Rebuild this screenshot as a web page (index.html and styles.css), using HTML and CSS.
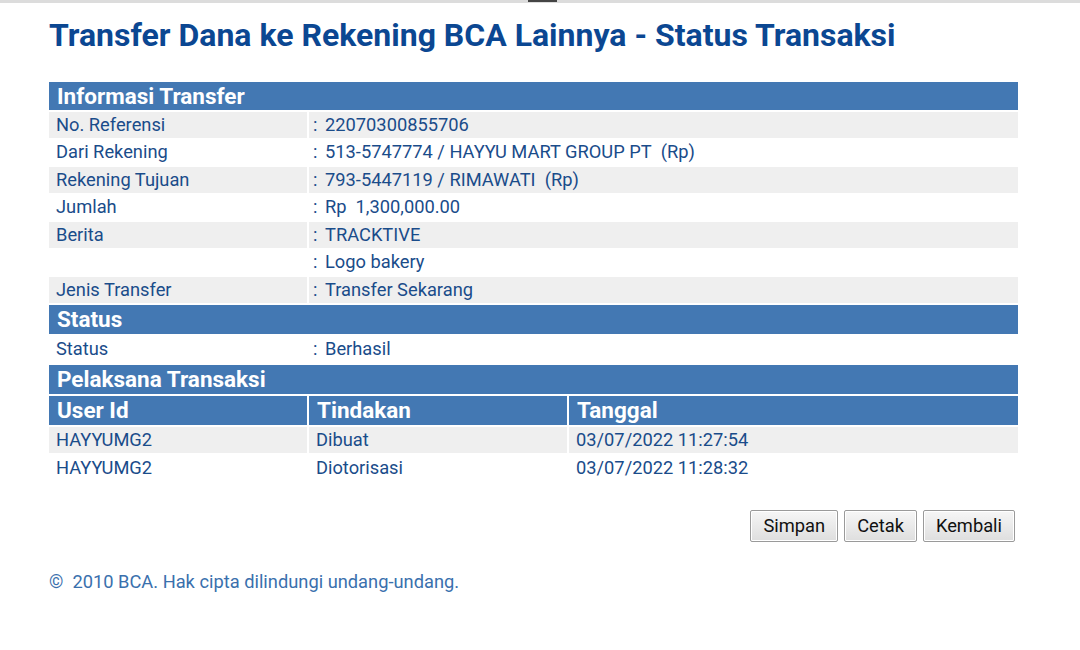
FILE: index.html
```html
<!DOCTYPE html>
<html>
<head>
<meta charset="utf-8">
<link rel="stylesheet" href="styles.css">
</head>
<body>
<div class="topbar"><span class="topbar-knob"></span></div>
<div class="page">
  <h1 class="title">Transfer Dana ke Rekening BCA Lainnya - Status Transaksi</h1>
  <table class="info first">
    <colgroup><col class="c-label"><col></colgroup>
    <tr class="head"><td colspan="2">Informasi Transfer</td></tr>
    <tr class="alt"><td>No. Referensi</td><td><span class="colon">:</span>22070300855706</td></tr>
    <tr><td>Dari Rekening</td><td><span class="colon">:</span>513-5747774 / HAYYU MART GROUP PT&nbsp; (Rp)</td></tr>
    <tr class="alt"><td>Rekening Tujuan</td><td><span class="colon">:</span>793-5447119 / RIMAWATI&nbsp; (Rp)</td></tr>
    <tr><td>Jumlah</td><td><span class="colon">:</span>Rp&nbsp; 1,300,000.00</td></tr>
    <tr class="alt"><td>Berita</td><td><span class="colon">:</span>TRACKTIVE</td></tr>
    <tr><td></td><td><span class="colon">:</span>Logo bakery</td></tr>
    <tr class="alt"><td>Jenis Transfer</td><td><span class="colon">:</span>Transfer Sekarang</td></tr>
    <tr class="head tall"><td colspan="2">Status</td></tr>
    <tr class="status-row"><td>Status</td><td><span class="colon">:</span>Berhasil</td></tr>
  </table>
  <table class="info exec">
    <colgroup><col class="c-label"><col class="c-label"><col></colgroup>
    <tr class="head tall"><td colspan="3">Pelaksana Transaksi</td></tr>
    <tr class="head tall"><td>User Id</td><td>Tindakan</td><td>Tanggal</td></tr>
    <tr class="alt"><td>HAYYUMG2</td><td>Dibuat</td><td>03/07/2022 11:27:54</td></tr>
    <tr><td>HAYYUMG2</td><td>Diotorisasi</td><td>03/07/2022 11:28:32</td></tr>
  </table>
  <div class="actions">
    <button class="btn">Simpan</button>
    <button class="btn">Cetak</button>
    <button class="btn">Kembali</button>
  </div>
  <p class="footer">©&nbsp; 2010 BCA. Hak cipta dilindungi undang-undang.</p>
</div>
</body>
</html>
```
FILE: styles.css
```css
html, body {
  margin: 0;
  padding: 0;
  background: #ffffff;
  font-family: Roboto, "Liberation Sans", sans-serif;
}
.topbar {
  height: 3px;
  background: #dcdcdc;
  position: relative;
}
.topbar-knob {
  position: absolute;
  left: 528px;
  top: 0;
  width: 29px;
  height: 2px;
  background: #444;
}
.page {
  padding: 0 60px 0 47px;
}
.title {
  margin: 13px 0 0 2px;
  font-size: 32px;
  font-weight: 700;
  line-height: 38px;
  color: #0b4792;
}
.info {
  width: 973px;
  table-layout: fixed;
  border-collapse: separate;
  border-spacing: 2px;
  font-size: 18.3px;
  color: #1a4c8a;
}
.info.first {
  margin-top: 26px;
}
.info td {
  height: 25.5px;
  padding: 0 0 0 7px;
  line-height: 20px;
  vertical-align: middle;
  white-space: nowrap;
}
.c-label {
  width: 258px;
}
.info tr.alt td {
  background: #efefef;
}
.info tr.head td {
  background: #4378b3;
  color: #ffffff;
  font-weight: 700;
  font-size: 22.5px;
  height: 28px;
  padding-left: 8px;
}
.info tr.head.tall td {
  height: 29px;
}
.info tr.status-row td {
  height: 27px;
}
.colon {
  display: inline-block;
  width: 9px;
  margin-left: -3px;
  margin-right: 3px;
}
.exec {
  margin-top: -2px;
}
.exec td {
  height: 26px;
}
.actions {
  display: flex;
  justify-content: flex-end;
  gap: 6px;
  margin-top: 27px;
  padding-right: 5px;
}
.btn {
  font-family: Roboto, "Liberation Sans", sans-serif;
  font-size: 18.3px;
  color: #111;
  height: 32px;
  padding: 0 12px;
  border: 1px solid #9a9a9a;
  border-radius: 2px;
  background: linear-gradient(#f6f6f6, #dedede);
  box-shadow: inset 0 0 0 1px #ffffff;
}
.footer {
  margin: 29px 0 0 2px;
  font-size: 18.3px;
  color: #3a70ad;
}
```
